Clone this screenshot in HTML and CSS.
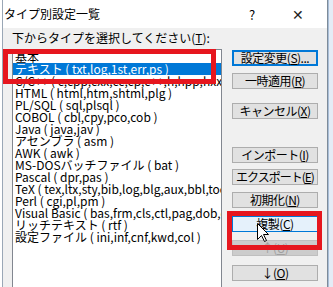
FILE: index.html
```html
<!DOCTYPE html>
<html lang="ja">
<head>
    <meta charset="UTF-8">
    <title>タイプ別設定一覧</title>
    <link rel="stylesheet" href="styles.css">
</head>
<body>
    <div class="screen">
        <div class="window">
            <div class="titlebar">
                <span class="title">タイプ別設定一覧</span>
                <span class="help">?</span>
                <span class="close">✕</span>
            </div>
            <div class="content">
                <div class="left">
                    <div class="label">下からタイプを選択してください(<u>T</u>):</div>
                    <ul class="listbox">
                        <li>基本</li>
                        <li class="selected">テキスト ( txt,log,1st,err,ps )</li>
                        <li>C/C++ ( c,cpp,cxx,cc,cp,c++,h,hpp,hxx,hh,hp,h++ )</li>
                        <li>HTML ( html,htm,shtml,plg )</li>
                        <li>PL/SQL ( sql,plsql )</li>
                        <li>COBOL ( cbl,cpy,pco,cob )</li>
                        <li>Java ( java,jav )</li>
                        <li>アセンブラ ( asm )</li>
                        <li>AWK ( awk )</li>
                        <li>MS-DOSバッチファイル ( bat )</li>
                        <li>Pascal ( dpr,pas )</li>
                        <li>TeX ( tex,ltx,sty,bib,log,blg,aux,bbl,toc,lof,lot,idx,ind,glo )</li>
                        <li>Perl ( cgi,pl,pm )</li>
                        <li>Visual Basic ( bas,frm,cls,ctl,pag,dob,dsr,vb )</li>
                        <li>リッチテキスト ( rtf )</li>
                        <li>設定ファイル ( ini,inf,cnf,kwd,col )</li>
                    </ul>
                </div>
                <div class="buttons">
                    <button class="btn default b-edit">設定変更(<u>S</u>)...</button>
                    <button class="btn b-apply">一時適用(<u>R</u>)</button>
                    <button class="btn b-cancel">キャンセル(<u>X</u>)</button>
                    <button class="btn b-import">インポート(<u>I</u>)</button>
                    <button class="btn b-export">エクスポート(<u>E</u>)</button>
                    <button class="btn b-init">初期化(<u>N</u>)</button>
                    <button class="btn hover b-copy">複製(<u>C</u>)</button>
                    <button class="btn disabled b-up">↑(<u>U</u>)</button>
                    <button class="btn b-down">↓(<u>O</u>)</button>
                </div>
            </div>
        </div>
        <div class="behind"></div>

        <div class="mark mark-list"></div>
        <div class="mark mark-copy"></div>
        <svg class="cursor" width="13" height="20" viewBox="0 0 13 20">
            <path d="M0.5 0.5 L0.5 16.5 L4.5 12.5 L7.5 18.5 L9.5 17.5 L6.5 11.5 L11.5 11.5 Z" fill="#fff" stroke="#000" stroke-width="1"/>
        </svg>
    </div>
</body>
</html>
```

FILE: styles.css
```css
body {
    margin: 0;
    font-family: "Noto Sans CJK JP", "Noto Sans", sans-serif;
    font-size: 12px;
    color: #000;
    background: #fff;
}

.screen {
    position: relative;
    display: flex;
    width: 333px;
    height: 287px;
    overflow: hidden;
    padding-left: 2px;
    box-sizing: border-box;
}

.window {
    width: 326px;
    height: 287px;
    border-left: 1px solid #9aa7b6;
    border-right: 1px solid #7d8b99;
    background: #f0f0f0;
    box-sizing: border-box;
}

.behind {
    flex: 1;
    background: #e4ecf6;
    border-left: 1px solid #a9bed8;
}

.titlebar {
    height: 28px;
    background: #fff;
    display: flex;
    align-items: center;
    font-size: 12px;
    padding-right: 6px;
}

.title {
    flex: 1;
    padding-left: 1px;
    padding-bottom: 2px;
}

.help {
    width: 46px;
    text-align: center;
    font-size: 13px;
}

.close {
    width: 46px;
    text-align: center;
    font-size: 14px;
    color: #222;
}

.content {
    display: flex;
    align-items: flex-start;
    padding-left: 9px;
}

.left {
    width: 210px;
}

.label {
    margin-top: 3px;
    height: 14px;
    line-height: 14px;
    margin-bottom: 4px;
    white-space: nowrap;
}

.listbox {
    list-style: none;
    margin: 0;
    padding: 1px 0 0;
    height: 240px;
    border: 1px solid #828790;
    background: #fff;
    overflow: hidden;
    box-sizing: border-box;
}

.listbox li {
    height: 12px;
    line-height: 12px;
    padding-left: 2px;
    white-space: nowrap;
}

.listbox li.selected {
    background: #0078d7;
    color: #fff;
}

.buttons {
    display: flex;
    flex-direction: column;
    margin-left: 10px;
    padding-top: 22px;
}

.btn {
    width: 86px;
    height: 16px;
    padding: 0;
    font-family: inherit;
    font-size: 12px;
    line-height: 14px;
    letter-spacing: -0.5px;
    white-space: nowrap;
    background: #e1e1e1;
    border: 1px solid #adadad;
    color: #000;
    box-sizing: border-box;
    overflow: visible;
}

.btn.default {
    border: 2px solid #0078d7;
    line-height: 12px;
}

.btn.hover {
    background: #e5f1fb;
    border-color: #0078d7;
}

.btn.disabled {
    background: #cccccc;
    border-color: #bfbfbf;
    color: #a0a0a0;
}

.b-apply { margin-top: 7px; }
.b-cancel { margin-top: 14px; }
.b-import { margin-top: 28px; }
.b-export { margin-top: 6px; letter-spacing: -1px; }
.b-init { margin-top: 7px; }
.b-copy { margin-top: 8px; }
.b-up { margin-top: 8px; }
.b-down { margin-top: 9px; }

/* red annotation boxes drawn over the dialog */
.mark {
    position: absolute;
    border: 5px solid #e6161e;
    box-sizing: border-box;
}

.mark-list {
    left: 3px;
    top: 49px;
    width: 213px;
    height: 35px;
}

.mark-copy {
    left: 227px;
    top: 211px;
    width: 95px;
    height: 39px;
}

.cursor {
    position: absolute;
    left: 257px;
    top: 223px;
}
```
